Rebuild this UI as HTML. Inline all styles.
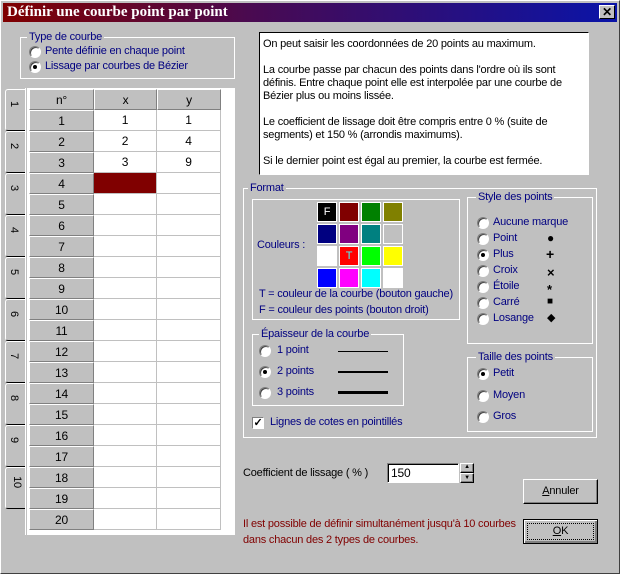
<!DOCTYPE html>
<html><head><meta charset="utf-8"><style>
*{margin:0;padding:0;box-sizing:border-box}
body{width:620px;height:574px;background:#c0c0c0;font-family:"Liberation Sans",sans-serif;font-size:11px;letter-spacing:-0.2px;position:relative;overflow:hidden;border:1px solid #fff;border-right-color:#404040;border-bottom-color:#404040}
.a{position:absolute;white-space:nowrap}
.n{color:#000080}
.title{left:2px;top:2px;width:614px;height:19px;background:linear-gradient(90deg,#800000,#4a0a50 40%,#0a14a8);}
.title span{position:absolute;left:4px;top:1px;color:#fff;font:bold 15px "Liberation Serif",serif;letter-spacing:0}
.close{right:4px;top:4px;width:16px;height:14px;background:#c0c0c0;border:1px solid #fff;border-right-color:#000;border-bottom-color:#000;font:bold 12px "Liberation Sans";text-align:center;line-height:12px}
.grp{position:absolute;border:1px solid #fff}
.lbl{position:absolute;background:#c0c0c0;padding:0 2px;top:-8px;left:6px;color:#000080;line-height:14px}
.rad{position:absolute;width:12px;height:12px;border-radius:50%;background:#fff;border:1px solid #808080;border-right-color:#fff;border-bottom-color:#fff;box-shadow:inset 1px 1px 0 #404040}
.rad.on::after{content:"";position:absolute;left:3px;top:3px;width:4px;height:4px;border-radius:50%;background:#000}
.cell{position:absolute;border-right:1px solid #c0c0c0;border-bottom:1px solid #c0c0c0;text-align:center;line-height:20px;height:21px;font-size:12px}
.hd{background:#c0c0c0;border-top:1px solid #fff;border-left:1px solid #fff;border-right:1px solid #808080;border-bottom:1px solid #808080}
.tab{position:absolute;left:4px;width:20px;height:42px;border-top:1px solid #fff;border-left:1px solid #fff;border-bottom:1px solid #000;border-radius:3px 0 0 3px}
.tab span{position:absolute;left:5px;top:8px;transform:rotate(90deg);font-size:11px}
.sw{position:absolute;width:20px;height:20px;border:1px solid #fff;outline:1px solid #c0c0c0}
.btn{position:absolute;background:#c0c0c0;border:1px solid #fff;border-right-color:#000;border-bottom-color:#000;box-shadow:inset -1px -1px 0 #808080;text-align:center;line-height:22px}
</style></head><body>
<div class="a title"><span>Définir une courbe point par point</span></div>
<div class="a close">✕</div>

<div class="grp" style="left:19px;top:36px;width:215px;height:42px"><div class="lbl">Type de courbe</div></div>
<div class="rad" style="left:28px;top:45px"></div><div class="a n" style="left:44px;top:44px">Pente définie en chaque point</div>
<div class="rad on" style="left:28px;top:60px"></div><div class="a n" style="left:44px;top:59px">Lissage par courbes de Bézier</div>

<div class="a" style="left:26px;top:87px;width:208px;height:447px;background:#fff"></div>
<div class="a" style="left:24px;top:87px;width:1px;height:447px;background:#fff"></div>
<div class="tab" style="top:88px"><span>1</span></div>
<div class="tab" style="top:130px"><span>2</span></div>
<div class="tab" style="top:172px"><span>3</span></div>
<div class="tab" style="top:214px"><span>4</span></div>
<div class="tab" style="top:256px"><span>5</span></div>
<div class="tab" style="top:298px"><span>6</span></div>
<div class="tab" style="top:340px"><span>7</span></div>
<div class="tab" style="top:382px"><span>8</span></div>
<div class="tab" style="top:424px"><span>9</span></div>
<div class="tab" style="top:466px"><span>10</span></div>

<div class="cell hd" style="left:28px;top:88px;width:65px">n°</div>
<div class="cell hd" style="left:93px;top:88px;width:63px">x</div>
<div class="cell hd" style="left:156px;top:88px;width:64px">y</div>
<div id="rows"></div>
<script>
var h='',d={1:[1,1],2:[2,4],3:[3,9]};
for(var i=1;i<=20;i++){var y=109+(i-1)*21;
h+='<div class="cell hd" style="left:28px;top:'+y+'px;width:65px">'+i+'</div>';
var v=d[i]||['',''];
h+='<div class="cell" style="left:93px;top:'+y+'px;width:63px;'+(i==4?'background:#800000':'')+'">'+v[0]+'</div>';
h+='<div class="cell" style="left:156px;top:'+y+'px;width:64px">'+v[1]+'</div>';}
document.getElementById('rows').innerHTML=h;
</script>

<div class="a" style="left:258px;top:31px;width:330px;height:143px;background:#fff;border:1px solid #000;border-right-color:#fff;border-bottom-color:#fff;line-height:13px;padding:5px 3px;white-space:normal">On peut saisir les coordonnées de 20 points au maximum.<br><br>La courbe passe par chacun des points dans l'ordre où ils sont définis. Entre chaque point elle est interpolée par une courbe de Bézier plus ou moins lissée.<br><br>Le coefficient de lissage doit être compris entre 0 % (suite de segments) et 150 % (arrondis maximums).<br><br>Si le dernier point est égal au premier, la courbe est fermée.</div>

<div class="grp" style="left:242px;top:187px;width:354px;height:250px"><div class="lbl" style="left:4px">Format</div></div>
<div class="grp" style="left:251px;top:198px;width:208px;height:121px"></div>
<div class="a n" style="left:256px;top:238px">Couleurs :</div>
<div class="sw" style="left:316px;top:201px;background:#000;color:#fff;text-align:center;line-height:18px">F</div>
<div class="sw" style="left:338px;top:201px;background:#800000"></div>
<div class="sw" style="left:360px;top:201px;background:#008000"></div>
<div class="sw" style="left:382px;top:201px;background:#808000"></div>
<div class="sw" style="left:316px;top:223px;background:#000080"></div>
<div class="sw" style="left:338px;top:223px;background:#800080"></div>
<div class="sw" style="left:360px;top:223px;background:#008080"></div>
<div class="sw" style="left:382px;top:223px;background:#c0c0c0"></div>
<div class="sw" style="left:316px;top:245px;background:#fff"></div>
<div class="sw" style="left:338px;top:245px;background:#f00;color:#40ffff;text-align:center;line-height:18px">T</div>
<div class="sw" style="left:360px;top:245px;background:#0f0"></div>
<div class="sw" style="left:382px;top:245px;background:#ff0"></div>
<div class="sw" style="left:316px;top:267px;background:#00f"></div>
<div class="sw" style="left:338px;top:267px;background:#f0f"></div>
<div class="sw" style="left:360px;top:267px;background:#0ff"></div>
<div class="sw" style="left:382px;top:267px;background:#fff"></div>
<div class="a n" style="left:258px;top:287px">T = couleur de la courbe (bouton gauche)</div>
<div class="a n" style="left:258px;top:303px">F = couleur des points (bouton droit)</div>

<div class="grp" style="left:466px;top:196px;width:126px;height:147px"><div class="lbl" style="left:8px">Style des points</div></div>
<div class="rad" style="left:476px;top:216px"></div><div class="a n" style="left:492px;top:215px">Aucune marque</div>
<div class="rad" style="left:476px;top:232px"></div><div class="a n" style="left:492px;top:231px">Point</div><div class="a" style="left:546px;top:230px;font-size:12px">●</div>
<div class="rad on" style="left:476px;top:248px"></div><div class="a n" style="left:492px;top:247px">Plus</div><div class="a" style="left:545px;top:245px;font-weight:bold;font-size:14px">+</div>
<div class="rad" style="left:476px;top:264px"></div><div class="a n" style="left:492px;top:263px">Croix</div><div class="a" style="left:546px;top:264px;font-weight:bold;font-size:13px">×</div>
<div class="rad" style="left:476px;top:280px"></div><div class="a n" style="left:492px;top:279px">Étoile</div><div class="a" style="left:546px;top:281px;font-weight:bold;font-size:13px">*</div>
<div class="rad" style="left:476px;top:296px"></div><div class="a n" style="left:492px;top:295px">Carré</div><div class="a" style="left:546px;top:295px;font-size:10px">■</div>
<div class="rad" style="left:476px;top:312px"></div><div class="a n" style="left:492px;top:311px">Losange</div><div class="a" style="left:546px;top:310px;font-size:11px">◆</div>

<div class="grp" style="left:251px;top:333px;width:152px;height:72px"><div class="lbl" style="left:6px">Épaisseur de la courbe</div></div>
<div class="rad" style="left:258px;top:344px"></div><div class="a n" style="left:276px;top:343px">1 point</div><div class="a" style="left:337px;top:350px;width:50px;height:1px;background:#000"></div>
<div class="rad on" style="left:258px;top:365px"></div><div class="a n" style="left:276px;top:364px">2 points</div><div class="a" style="left:337px;top:370px;width:50px;height:2px;background:#000"></div>
<div class="rad" style="left:258px;top:386px"></div><div class="a n" style="left:276px;top:385px">3 points</div><div class="a" style="left:337px;top:390px;width:50px;height:3px;background:#000"></div>

<div class="grp" style="left:466px;top:356px;width:126px;height:75px"><div class="lbl" style="left:8px">Taille des points</div></div>
<div class="rad on" style="left:476px;top:367px"></div><div class="a n" style="left:492px;top:366px">Petit</div>
<div class="rad" style="left:476px;top:389px"></div><div class="a n" style="left:492px;top:388px">Moyen</div>
<div class="rad" style="left:476px;top:410px"></div><div class="a n" style="left:492px;top:409px">Gros</div>

<div class="a" style="left:251px;top:416px;width:12px;height:12px;background:#fff;border:1px solid #808080;border-right-color:#fff;border-bottom-color:#fff;font-size:11px;line-height:10px;text-align:center;font-weight:bold">✓</div>
<div class="a n" style="left:269px;top:415px">Lignes de cotes en pointillés</div>

<div class="a" style="left:242px;top:466px">Coefficient de lissage ( % )</div>
<div class="a" style="left:386px;top:462px;width:72px;height:20px;background:#fff;border:1px solid #808080;border-right-color:#fff;border-bottom-color:#fff;box-shadow:inset 1px 1px 0 #000;padding:2px 3px;font-size:12px">150</div>
<div class="btn" style="left:459px;top:462px;width:14px;height:10px;line-height:6px;font-size:6px">▲</div>
<div class="btn" style="left:459px;top:472px;width:14px;height:10px;line-height:8px;font-size:6px">▼</div>
<div class="btn" style="left:522px;top:478px;width:75px;height:25px"><u>A</u>nnuler</div>
<div class="btn" style="left:522px;top:518px;width:75px;height:25px;border:1px solid #000;box-shadow:inset 1px 1px 0 #fff,inset -2px -2px 0 #808080"><span style="border:1px dotted #000;display:block;margin:3px;line-height:15px"><u>O</u>K</span></div>
<div class="a" style="left:242px;top:515px;color:#800000;line-height:16px">Il est possible de définir simultanément jusqu'à 10 courbes<br>dans chacun des 2 types de courbes.</div>
</body></html>
